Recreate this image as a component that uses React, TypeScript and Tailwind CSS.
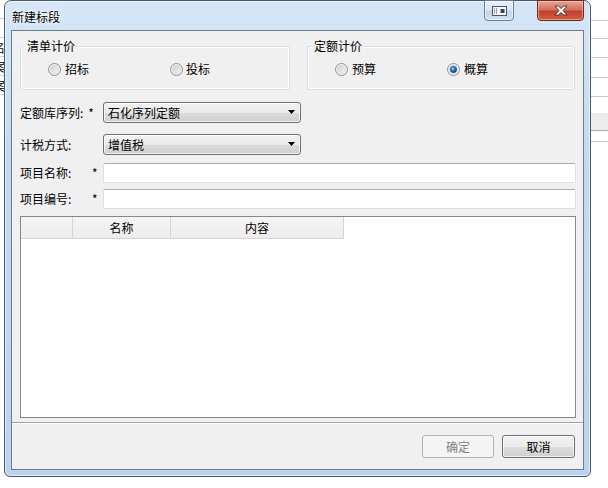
import React from "react";

function Radio({ checked }: { checked?: boolean }) {
  return (
    <svg width="13" height="13" viewBox="0 0 13 13" className="shrink-0">
      <defs>
        <linearGradient id={checked ? "rgc" : "rgu"} x1="0" y1="0" x2="1" y2="1">
          <stop offset="0" stopColor="#c9ccd1" />
          <stop offset="1" stopColor="#f7f7f7" />
        </linearGradient>
        <radialGradient id="dot" cx="0.4" cy="0.35" r="0.7">
          <stop offset="0" stopColor="#8fd0ff" />
          <stop offset="0.45" stopColor="#2a7fd4" />
          <stop offset="1" stopColor="#0c3d7a" />
        </radialGradient>
      </defs>
      <circle cx="6.5" cy="6.5" r="6" fill="#f4f4f4" stroke="#8e8f8f" strokeWidth="1" />
      <circle cx="6.5" cy="6.5" r="4.2" fill={`url(#${checked ? "rgc" : "rgu"})`} stroke="#d2d4d8" strokeWidth="0.6" />
      {checked && <circle cx="6.5" cy="6.5" r="3.2" fill="url(#dot)" stroke="#1a3f6a" strokeWidth="0.5" />}
    </svg>
  );
}

function Combo({ text }: { text: string }) {
  return (
    <div className="w-[198px] h-[21px] border border-[#707070] rounded-[3px] bg-[linear-gradient(180deg,#f2f2f2_0%,#ebebeb_50%,#dddddd_51%,#cfcfcf_100%)] flex items-center pl-[4px] pr-[4px] shadow-[inset_0_0_0_1px_rgba(255,255,255,0.7)]">
      <span className="flex-1 leading-[14px]">{text}</span>
      <svg width="8" height="5" viewBox="0 0 8 5">
        <path d="M0 0 H7 L3.5 4 Z" fill="#000" />
      </svg>
    </div>
  );
}

function TextBox() {
  return (
    <div className="w-[473px] h-[20px] bg-white border border-[#dbdfe6] border-t-[#abadb3] rounded-[2px]" />
  );
}

export default function App() {
  const font = "font-['Noto_Sans_CJK_SC','Noto_Sans',sans-serif]";
  return (
    <div className={`relative w-[608px] h-[488px] bg-white overflow-hidden text-[12px] text-black ${font}`}>
      {/* background spreadsheet, left strip */}
      <div className="absolute left-[-7px] top-0 flex flex-col leading-[14px]">
        <div className="h-[19px] pt-[4px] border-b border-[#d0d0d0]">0</div>
        <div className="h-[19px] pt-[3px] border-b border-[#d0d0d0]">0</div>
        <div className="h-[19px] pt-[3px] border-b border-[#d0d0d0]">名</div>
        <div className="h-[19px] pt-[3px] border-b border-[#d0d0d0]">案</div>
        <div className="h-[19px] pt-[3px] border-b border-[#d0d0d0]">案</div>
      </div>
      {/* background spreadsheet, right strip */}
      <div className="absolute right-0 top-0 w-[20px] flex flex-col">
        <div className="h-[21px] border-b border-[#c8c8c8]" />
        <div className="h-[18px] border-b border-[#c8c8c8]" />
        <div className="h-[19px] border-b border-[#c8c8c8]" />
        <div className="h-[20px] border-b border-[#c8c8c8]" />
        <div className="h-[19px] border-b border-[#c8c8c8]" />
        <div className="h-[16px]" />
        <div className="h-[18px] bg-[#ececec] border-b border-[#a8a8a8]" />
        <div className="h-[10px]" />
        <div className="h-[1px] bg-[#c8c8c8]" />
      </div>

      {/* dialog window */}
      <div className="absolute left-[4px] top-0 w-[587px] h-[477px] rounded-t-[7px] rounded-b-[6px] border border-[#4a5868] bg-[linear-gradient(180deg,#d6e6f7_0%,#c3daf2_30%,#bad3ee_100%)] shadow-[inset_0_0_0_1px_rgba(255,255,255,0.55)] flex flex-col">
        {/* title bar */}
        <div className="h-[29px] flex items-start shrink-0">
          <div className="ml-[7px] mt-[9px] leading-[14px] [text-shadow:0_0_6px_#ffffff,0_0_3px_#ffffff]">新建标段</div>
          <div className="flex-1" />
          <div className="-mt-px w-[30px] h-[21px] rounded-b-[4px] border border-[#6c7d90] bg-[linear-gradient(180deg,#e9f1fa_0%,#d4e3f3_50%,#c0d4ea_51%,#cfe0f2_100%)] shadow-[inset_0_0_0_1px_rgba(255,255,255,0.6)] flex items-center justify-center">
            <svg width="15" height="10" viewBox="0 0 15 10">
              <rect x="0.5" y="0.5" width="14" height="9" fill="#f4f6f8" stroke="#4d5560" />
              <rect x="2" y="2" width="1" height="6" fill="#9aa3ad" />
              <rect x="4" y="2" width="1" height="6" fill="#9aa3ad" />
              <rect x="8.5" y="3" width="4" height="4" fill="#3d4550" />
            </svg>
          </div>
          <div className="w-[23px]" />
          <div className="-mt-px mr-[6px] w-[47px] h-[21px] rounded-b-[4px] border border-[#6e2a20] bg-[linear-gradient(180deg,#e9a696_0%,#d4705f_45%,#c2402a_55%,#d0603f_100%)] shadow-[inset_0_0_0_1px_rgba(255,210,200,0.5)] flex items-center justify-center">
            <svg width="14" height="11" viewBox="0 0 14 11">
              <path d="M1 1 H4.5 L7 3.6 L9.5 1 H13 L9 5.5 L13 10 H9.5 L7 7.4 L4.5 10 H1 L5 5.5 Z" fill="#ffffff" stroke="#4a2b28" strokeWidth="0.9" strokeLinejoin="round" />
            </svg>
          </div>
        </div>

        {/* client area */}
        <div className="mx-[6px] h-[440px] border border-[#6d7b8d] bg-[#f0f0f0] flex flex-col shrink-0">
          <div className="pl-[8px] pr-[7px] pt-[15px] flex flex-col">
            {/* groups */}
            <div className="flex gap-[17px]">
              <div className="relative w-[270px] h-[44px] border border-[#d5dfe5] rounded-[3px] shadow-[inset_0_0_0_1px_#ffffff]">
                <span className="absolute left-[5px] top-[-8px] px-px bg-[#f0f0f0] leading-[14px]">清单计价</span>
                <div className="h-full flex items-center pl-[27px] pt-[2px]">
                  <div className="w-[122px] flex items-center gap-[4px]">
                    <Radio />
                    <span className="leading-[14px]">招标</span>
                  </div>
                  <div className="flex items-center gap-[3px]">
                    <Radio />
                    <span className="leading-[14px]">投标</span>
                  </div>
                </div>
              </div>
              <div className="relative w-[268px] h-[44px] border border-[#d5dfe5] rounded-[3px] shadow-[inset_0_0_0_1px_#ffffff]">
                <span className="absolute left-[5px] top-[-8px] px-px bg-[#f0f0f0] leading-[14px]">定额计价</span>
                <div className="h-full flex items-center pl-[27px] pt-[2px]">
                  <div className="w-[112px] flex items-center gap-[4px]">
                    <Radio />
                    <span className="leading-[14px]">预算</span>
                  </div>
                  <div className="flex items-center gap-[4px]">
                    <Radio checked />
                    <span className="leading-[14px]">概算</span>
                  </div>
                </div>
              </div>
            </div>

            {/* form rows */}
            <div className="mt-[12px] flex items-center">
              <div className="w-[83px] flex items-center leading-[14px]">
                <span>定额库序列:</span>
                <span className="ml-[5px]">*</span>
              </div>
              <Combo text="石化序列定额" />
            </div>
            <div className="mt-[11px] flex items-center">
              <div className="w-[83px] leading-[14px]">计税方式:</div>
              <Combo text="增值税" />
            </div>
            <div className="mt-[8px] flex items-center">
              <div className="w-[83px] flex items-center leading-[14px]">
                <span className="w-[72px]">项目名称:</span>
                <span>*</span>
              </div>
              <TextBox />
            </div>
            <div className="mt-[6px] flex items-center">
              <div className="w-[83px] flex items-center leading-[14px]">
                <span className="w-[72px]">项目编号:</span>
                <span>*</span>
              </div>
              <TextBox />
            </div>

            {/* table */}
            <div className="mt-[7px] w-[556px] h-[202px] border border-[#828790] bg-white flex flex-col">
              <div className="h-[22px] flex">
                <div className="w-[52px] h-full bg-[linear-gradient(180deg,#f5f5f5_0%,#ececec_100%)] border-r border-b border-[#d5d5d5]" />
                <div className="w-[98px] h-full bg-[linear-gradient(180deg,#f5f5f5_0%,#ececec_100%)] border-r border-b border-[#d5d5d5] flex items-center justify-center leading-[14px]">名称</div>
                <div className="w-[173px] h-full bg-[linear-gradient(180deg,#f5f5f5_0%,#ececec_100%)] border-r border-b border-[#d5d5d5] flex items-center justify-center leading-[14px]">内容</div>
              </div>
            </div>
          </div>

          {/* bottom bar */}
          <div className="mt-[4px] border-t border-[#a0a0a0] flex-1 flex flex-col">
            <div className="h-px bg-white" />
            <div className="mt-[11px] flex justify-end gap-[8px] pr-[8px]">
              <div className="w-[72px] h-[23px] rounded-[3px] border border-[#adb2b5] bg-[#f4f4f4] text-[#838383] flex items-center justify-center leading-[14px]">确定</div>
              <div className="w-[73px] h-[23px] rounded-[3px] border border-[#707070] bg-[linear-gradient(180deg,#f2f2f2_0%,#ebebeb_50%,#dddddd_51%,#cfcfcf_100%)] shadow-[inset_0_0_0_1px_rgba(255,255,255,0.7)] flex items-center justify-center leading-[14px]">取消</div>
            </div>
          </div>
        </div>
      </div>
    </div>
  );
}
